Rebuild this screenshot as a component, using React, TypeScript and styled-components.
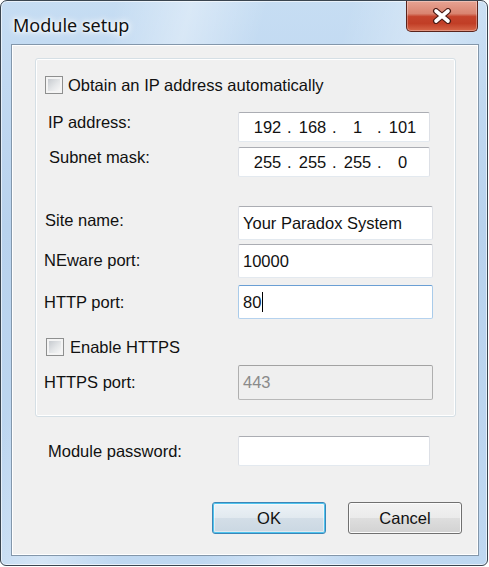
import React from 'react';
import styled, { createGlobalStyle } from 'styled-components';

const GlobalStyle = createGlobalStyle`
  html, body {
    margin: 0;
    padding: 0;
    background: #ffffff;
  }
  body {
    font-family: "Liberation Sans", Arial, sans-serif;
  }
`;

const Window = styled.div`
  width: 488px;
  height: 566px;
  box-sizing: border-box;
  border: 1px solid #3a4550;
  border-radius: 7px 7px 6px 6px;
  overflow: hidden;
  display: flex;
  flex-direction: column;
  background:
    linear-gradient(105deg, rgba(255, 255, 255, 0) 18%, rgba(255, 255, 255, 0.35) 30%, rgba(255, 255, 255, 0) 42%),
    linear-gradient(105deg, rgba(255, 255, 255, 0) 55%, rgba(255, 255, 255, 0.3) 68%, rgba(255, 255, 255, 0) 80%),
    linear-gradient(180deg, #c6ddf3 0%, #b8d2ed 40%, #bfd8f1 100%);
  box-shadow: inset 0 0 0 1px rgba(255, 255, 255, 0.6);
`;

const TitleBar = styled.div`
  height: 43px;
  flex-shrink: 0;
  display: flex;
  align-items: flex-start;
  justify-content: space-between;
  padding: 0 9px 0 12px;
`;

const Title = styled.span`
  margin-top: 13px;
  font-family: "Noto Sans", "Open Sans", sans-serif;
  font-size: 18px;
  line-height: 23px;
  color: #111;
  text-shadow: 0 0 6px #fff, 0 0 10px #fff, 0 0 3px #fff;
`;

const CloseButton = styled.div`
  width: 72px;
  height: 31px;
  box-sizing: border-box;
  border: 1px solid #5a231b;
  border-top: none;
  border-radius: 0 0 5px 5px;
  background: linear-gradient(180deg, #e6a393 0%, #d98470 42%, #c5432c 52%, #c13e26 75%, #d8684a 100%);
  box-shadow: inset 0 0 0 1px rgba(255, 255, 255, 0.3);
  display: flex;
  align-items: center;
  justify-content: center;
`;

const Client = styled.div`
  flex: 1;
  margin: 0 8px 9px 10px;
  border: 1px solid #8397ab;
  background: #f0f0f0;
  box-shadow: inset 0 0 0 1px #ffffff;
  padding: 13px 16px 21px 23px;
  display: flex;
  flex-direction: column;
`;

const GroupBox = styled.div`
  margin-right: 6px;
  border: 1px solid #d5dfe5;
  border-radius: 3px;
  box-shadow: inset 0 0 0 1px #ffffff;
  padding: 16px 0 16px 8px;
  display: flex;
  flex-direction: column;
`;

const Row = styled.div<{ $top: number; $h: number }>`
  display: flex;
  align-items: center;
  margin-top: ${(p) => p.$top}px;
  height: ${(p) => p.$h}px;
`;

const OuterRow = styled(Row)`
  margin-left: 9px;
`;

const Label = styled.span<{ $indent?: number; $lift?: number }>`
  width: 194px;
  flex-shrink: 0;
  box-sizing: border-box;
  padding-left: ${(p) => p.$indent || 0}px;
  padding-bottom: ${(p) => (p.$lift || 0) * 2}px;
  font-size: 16.5px;
  color: #111;
`;

const Field = styled.div<{ $w: number; $focus?: boolean; $disabled?: boolean }>`
  width: ${(p) => p.$w}px;
  height: 100%;
  box-sizing: border-box;
  border: 1px solid;
  border-color: ${(p) =>
    p.$focus
      ? '#6a9fd4 #a9cbea #b5d2ee #a9cbea'
      : p.$disabled
      ? '#a2a2a2 #afafaf #b8b8b8 #afafaf'
      : '#abadb3 #dde0e6 #e3e9ef #dde0e6'};
  border-radius: 2px;
  background: ${(p) => (p.$disabled ? '#efefef' : '#ffffff')};
  color: ${(p) => (p.$disabled ? '#8a8a8a' : '#111')};
  display: flex;
  align-items: center;
  padding-left: 4px;
  font-size: 16.5px;
`;

const IpField = styled(Field)`
  display: grid;
  grid-template-columns: 39px 6px 39px 6px 39px 6px 39px;
  padding-left: 9px;
`;

const Octet = styled.span`
  text-align: center;
`;

const Dot = styled.span`
  text-align: left;
`;

const Caret = styled.span`
  display: inline-block;
  width: 0;
  height: 20px;
  margin-left: 1px;
  border-left: 1.5px solid #000;
`;

const CheckRow = styled.label<{ $top: number; $indent: number; $gap: number }>`
  display: flex;
  align-items: center;
  height: 20px;
  margin-top: ${(p) => p.$top}px;
  padding-left: ${(p) => p.$indent}px;
  gap: ${(p) => p.$gap}px;
  font-size: 16.5px;
  color: #111;
`;

const CheckBox = styled.span`
  width: 18px;
  height: 18px;
  box-sizing: border-box;
  border: 1px solid #8e8f8f;
  padding: 2px;
  background: linear-gradient(135deg, #c6cacf 0%, #e4e6e8 55%, #f7f7f7 100%) content-box, #f6f6f6;
  box-shadow: inset 0 0 0 2px #f4f4f4;
`;

const ButtonBar = styled.div`
  display: flex;
  justify-content: flex-end;
  gap: 22px;
  margin-top: 36px;
`;

const Button = styled.div<{ $default?: boolean }>`
  width: 114px;
  height: 32px;
  box-sizing: border-box;
  border-radius: 3px;
  display: flex;
  align-items: center;
  justify-content: center;
  font-size: 16.5px;
  color: #111;
  border: 1px solid ${(p) => (p.$default ? '#3b86b8' : '#707070')};
  background: ${(p) =>
    p.$default
      ? 'linear-gradient(180deg, #edf3f7 0%, #e1e9ef 50%, #d3dee7 51%, #cad7e2 100%)'
      : 'linear-gradient(180deg, #f2f2f2 0%, #ebebeb 50%, #dedede 51%, #d2d2d2 100%)'};
  box-shadow: ${(p) =>
    p.$default
      ? 'inset 0 0 0 1px #4fc4ee, inset 0 0 0 2px rgba(255,255,255,0.45)'
      : 'inset 0 0 0 1px #fbfbfb'};
`;

const CloseIcon = () => (
  <svg width="22" height="16" viewBox="0 0 22 16">
    <path d="M5 3 L17 13 M17 3 L5 13" stroke="#4a1a14" strokeWidth="6" strokeLinecap="round" />
    <path d="M5 3 L17 13 M17 3 L5 13" stroke="#ffffff" strokeWidth="3.6" strokeLinecap="round" />
  </svg>
);

const IpValue: React.FC<{ parts: string[] }> = ({ parts }) => (
  <IpField $w={192}>
    {parts.map((part, i) => (
      <React.Fragment key={i}>
        {i > 0 && <Dot>.</Dot>}
        <Octet>{part}</Octet>
      </React.Fragment>
    ))}
  </IpField>
);

const App: React.FC = () => {
  return (
    <>
      <GlobalStyle />
      <Window>
        <TitleBar>
          <Title>Module setup</Title>
          <CloseButton>
            <CloseIcon />
          </CloseButton>
        </TitleBar>
        <Client>
          <GroupBox>
            <CheckRow $top={0} $indent={1} $gap={5}>
              <CheckBox />
              Obtain an IP address automatically
            </CheckRow>
            <Row $top={17} $h={30}>
              <Label $indent={4} $lift={5}>IP address:</Label>
              <IpValue parts={['192', '168', '1', '101']} />
            </Row>
            <Row $top={5} $h={30}>
              <Label $indent={5} $lift={5}>Subnet mask:</Label>
              <IpValue parts={['255', '255', '255', '0']} />
            </Row>
            <Row $top={29} $h={34}>
              <Label $indent={1} $lift={3}>Site name:</Label>
              <Field $w={195}>Your Paradox System</Field>
            </Row>
            <Row $top={4} $h={34}>
              <Label $lift={1}>NEware port:</Label>
              <Field $w={195}>10000</Field>
            </Row>
            <Row $top={7} $h={34}>
              <Label>HTTP port:</Label>
              <Field $w={195} $focus>
                80
                <Caret />
              </Field>
            </Row>
            <CheckRow $top={18} $indent={2} $gap={6}>
              <CheckBox />
              Enable HTTPS
            </CheckRow>
            <Row $top={8} $h={35}>
              <Label>HTTPS port:</Label>
              <Field $w={195} $disabled>443</Field>
            </Row>
          </GroupBox>
          <OuterRow $top={19} $h={30}>
            <Label $indent={4} $lift={-1}>Module password:</Label>
            <Field $w={192} />
          </OuterRow>
          <ButtonBar>
            <Button $default>OK</Button>
            <Button>Cancel</Button>
          </ButtonBar>
        </Client>
      </Window>
    </>
  );
};

export default App;
